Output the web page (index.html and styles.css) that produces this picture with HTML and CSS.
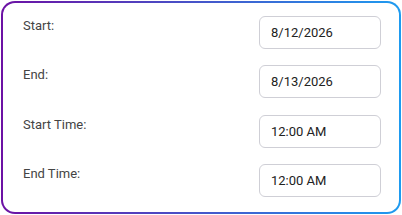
FILE: index.html
```html
<!DOCTYPE html>
<html>
<head>
<meta charset="utf-8">
<link rel="stylesheet" href="styles.css">
</head>
<body>
<div class="card">
  <div class="row">
    <label class="label">Start:</label>
    <input class="field" type="text" value="8/12/2026" readonly>
  </div>
  <div class="row">
    <label class="label">End:</label>
    <input class="field" type="text" value="8/13/2026" readonly>
  </div>
  <div class="row">
    <label class="label">Start Time:</label>
    <input class="field" type="text" value="12:00 AM" readonly>
  </div>
  <div class="row">
    <label class="label">End Time:</label>
    <input class="field" type="text" value="12:00 AM" readonly>
  </div>
</div>
</body>
</html>
```
FILE: styles.css
```css
html, body {
  margin: 0;
  padding: 0;
  background: #fff;
}
body {
  padding: 1px;
  font-family: Roboto, "Liberation Sans", sans-serif;
}
.card {
  box-sizing: border-box;
  width: 400px;
  height: 213px;
  border: 2px solid transparent;
  border-radius: 14px;
  background:
    linear-gradient(#fff, #fff) padding-box,
    linear-gradient(to right, #6c11a4, #1e9bf0) border-box;
  padding: 13px 18px 15px 20px;
  display: flex;
  flex-direction: column;
  justify-content: space-between;
}
.row {
  display: flex;
  justify-content: space-between;
  align-items: flex-start;
}
.label {
  margin-top: 2px;
  font-size: 13px;
  color: #444;
}
.field {
  box-sizing: border-box;
  width: 122px;
  height: 33px;
  margin: 0;
  padding: 0 11px;
  border: 1px solid #cfcfd6;
  border-radius: 6px;
  font-family: Roboto, "Liberation Sans", sans-serif;
  font-size: 13px;
  color: #222;
  background: #fff;
  outline: none;
}
```
